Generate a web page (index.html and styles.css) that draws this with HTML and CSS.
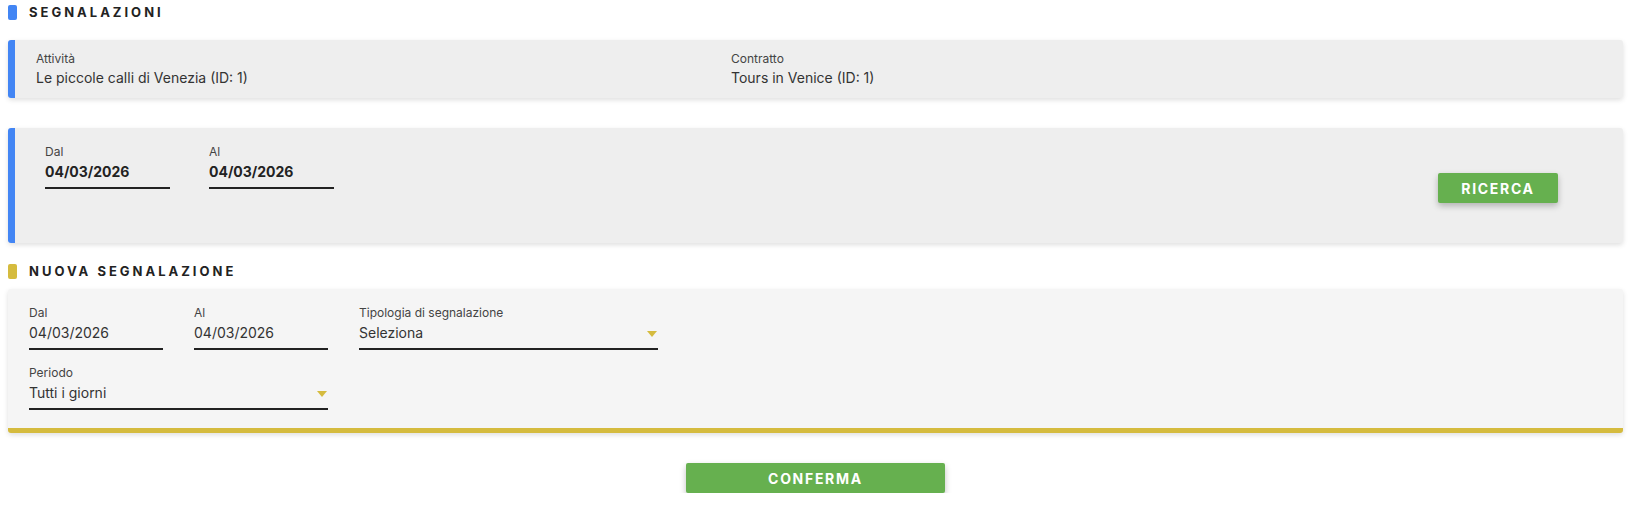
FILE: index.html
```html
<!DOCTYPE html>
<html lang="it">
<head>
<meta charset="utf-8">
<title>Segnalazioni</title>
<link rel="stylesheet" href="styles.css">
</head>
<body>
<div class="page">
  <h2 class="section-title"><span class="marker marker-blue"></span>SEGNALAZIONI</h2>

  <div class="card card-info">
    <div class="info-field">
      <div class="label">Attività</div>
      <div class="info-value">Le piccole calli di Venezia (ID: 1)</div>
    </div>
    <div class="info-field">
      <div class="label">Contratto</div>
      <div class="info-value">Tours in Venice (ID: 1)</div>
    </div>
  </div>

  <div class="card card-search">
    <div class="search-fields">
      <div class="field field-search">
        <div class="label">Dal</div>
        <div class="input input-bold">04/03/2026</div>
      </div>
      <div class="field field-search">
        <div class="label">Al</div>
        <div class="input input-bold">04/03/2026</div>
      </div>
    </div>
    <button class="btn btn-search">RICERCA</button>
  </div>

  <h2 class="section-title section-title-new"><span class="marker marker-gold"></span>NUOVA SEGNALAZIONE</h2>

  <div class="card card-new">
    <div class="form-row">
      <div class="field field-date">
        <div class="label">Dal</div>
        <div class="input">04/03/2026</div>
      </div>
      <div class="field field-date">
        <div class="label">Al</div>
        <div class="input">04/03/2026</div>
      </div>
      <div class="field field-select">
        <div class="label">Tipologia di segnalazione</div>
        <div class="input input-select"><span>Seleziona</span><span class="caret"></span></div>
      </div>
    </div>
    <div class="form-row">
      <div class="field field-select">
        <div class="label">Periodo</div>
        <div class="input input-select"><span>Tutti i giorni</span><span class="caret"></span></div>
      </div>
    </div>
  </div>

  <div class="actions">
    <button class="btn btn-confirm">CONFERMA</button>
  </div>
</div>
</body>
</html>
```
FILE: styles.css
```css
* { box-sizing: border-box; }

body {
  margin: 0;
  font-family: "Inter", "Noto Sans", sans-serif;
  color: #333;
  background: #fff;
}

.page {
  padding: 2px 7px 0 8px;
}

.section-title {
  display: flex;
  align-items: center;
  gap: 12px;
  margin: 0;
  height: 20px;
  font-size: 13px;
  font-weight: 700;
  letter-spacing: 3px;
  color: #222;
  line-height: 20px;
}

.section-title-new {
  margin-top: 18px;
}

.marker {
  display: block;
  width: 9px;
  height: 15px;
  border-radius: 2px;
}

.marker-blue { background: #4285f4; }
.marker-gold { background: #d5bb3e; }

.card {
  background: #eeeeee;
  border-radius: 3px;
  box-shadow: 0 2px 5px rgba(0, 0, 0, 0.13);
}

.card-info {
  margin-top: 18px;
  border-left: 7px solid #4285f4;
  padding: 11px 20px 10px 21px;
  display: grid;
  grid-template-columns: 695px 1fr;
}

.label {
  font-size: 12px;
  line-height: 16px;
  color: #444;
}

.info-value {
  margin-top: 1px;
  font-size: 14px;
  line-height: 20px;
  color: #333;
}

.card-search {
  margin-top: 30px;
  height: 115px;
  border-left: 7px solid #4285f4;
  padding: 16px 65px 0 30px;
  display: flex;
  align-items: flex-start;
}

.search-fields {
  display: flex;
  gap: 39px;
}

.field-search { width: 125px; }

.input {
  margin-top: 2px;
  font-size: 14px;
  line-height: 20px;
  padding-bottom: 5px;
  border-bottom: 2px solid #222;
  color: #333;
}

.input-bold {
  font-weight: 700;
  color: #222;
}

.btn {
  border: none;
  border-radius: 2px;
  background: #66b04f;
  color: #fff;
  font-family: inherit;
  font-size: 14px;
  font-weight: 700;
  letter-spacing: 1.7px;
  height: 30px;
  padding: 0;
  box-shadow: 0 3px 6px rgba(0, 0, 0, 0.25);
  cursor: pointer;
}

.btn-search {
  margin-left: auto;
  margin-top: 29px;
  width: 120px;
}

.card-new {
  margin-top: 8px;
  background: #f5f5f5;
  border-bottom: 5px solid #d5bb3e;
  padding: 16px 21px 18px 21px;
  display: flex;
  flex-direction: column;
  gap: 15px;
}

.form-row {
  display: flex;
  gap: 31px;
}

.field-date { width: 134px; }
.field-select { width: 299px; }

.input-select {
  display: flex;
  align-items: center;
  justify-content: space-between;
  padding-right: 1px;
}

.caret {
  width: 0;
  height: 0;
  margin-top: 2px;
  border-left: 5px solid transparent;
  border-right: 5px solid transparent;
  border-top: 6px solid #d5bb3e;
}

.actions {
  display: flex;
  justify-content: center;
  margin-top: 30px;
}

.btn-confirm {
  width: 259px;
}
```
